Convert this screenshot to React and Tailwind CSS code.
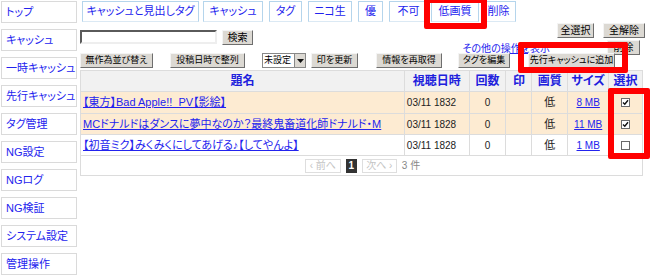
import React from "react";

const FONT = "[font-family:'Liberation_Sans','Noto_Sans_CJK_JP',sans-serif] [font-feature-settings:'palt']";

const sideItems = ["トップ", "キャッシュ", "一時キャッシュ", "先行キャッシュ", "タグ管理", "NG設定", "NGログ", "NG検証", "システム設定", "管理操作"];

const tabs = [
  ["キャッシュと見出しタグ", "w-[117px] ml-[2px]"],
  ["キャッシュ", "w-[60px] ml-[4px]"],
  ["タグ", "w-[33px] ml-[6px]"],
  ["ニコ生", "w-[44px] ml-[6px]"],
  ["優", "w-[25px] ml-[6px]"],
  ["不可", "w-[39px] ml-[6px]"],
  ["低画質", "w-[48px] ml-[3px]"],
  ["削除", "w-[35px] ml-[2px]"],
];

function Btn({ children, className = "", size = "text-[10px]" }) {
  return (
    <div className={`h-[15px] flex items-center justify-center bg-[#dcd9d3] border border-t-[#f4f4f4] border-l-[#f4f4f4] border-r-[#6e6e6e] border-b-[#6e6e6e] ${size} leading-none text-black whitespace-nowrap overflow-hidden ${className}`}>
      {children}
    </div>
  );
}

function Check({ checked }) {
  return (
    <span className="inline-flex w-[9px] h-[9px] border border-[#6a6a6a] bg-white items-center justify-center">
      {checked && (
        <svg width="7" height="7" viewBox="0 0 7 7">
          <path d="M1 3.5 L2.8 5.3 L6 1.3" stroke="#111" strokeWidth="1.4" fill="none" />
        </svg>
      )}
    </span>
  );
}

const rows = [
  { title: "【東方】Bad Apple!!  PV【影絵】", date: "03/11 1832", size: "8 MB", checked: true, bg: "bg-[#fdebd2]", h: "h-[22px]" },
  { title: "MCドナルドはダンスに夢中なのか？最終鬼畜道化師ドナルド・M", date: "03/11 1828", size: "11 MB", checked: true, bg: "bg-[#fdebd2]", h: "h-[21px]" },
  { title: "【初音ミク】みくみくにしてあげる♪【してやんよ】", date: "03/11 1828", size: "1 MB", checked: false, bg: "bg-white", h: "h-[21px]" },
];

const cols = ["w-[325px]", "w-[65px]", "w-[37px]", "w-[26px]", "w-[36px]", "w-[41px]", "w-[33px]"];

export default function App() {
  return (
    <div className={`relative w-[650px] h-[280px] overflow-hidden bg-white ${FONT}`}>
      <div className="flex">
        {/* Sidebar */}
        <div className="w-[78px] flex flex-col gap-[6px] pt-[1px]">
          {sideItems.map((s) => (
            <div key={s} className="ml-[1px] w-[76px] h-[22px] border border-[#dadada] flex items-center pl-[4px] text-[11px] text-[#2323ee] whitespace-nowrap">
              {s}
            </div>
          ))}
        </div>

        {/* Main */}
        <div className="ml-[2px] w-[565px] flex flex-col">
          {/* Tabs */}
          <div className="h-[22px] pt-[1px] flex">
            {tabs.map(([t, cls]) => (
              <div key={t} className={`${cls} h-[21px] border border-[#b5d5ec] border-b-[#dbe9f4] flex items-center justify-center text-[11px] text-[#2323ee] whitespace-nowrap`}>
                {t}
              </div>
            ))}
          </div>

          {/* Top block */}
          <div className="h-[30px] flex justify-between">
            <div className="flex items-start pt-[8px]">
              <div className="w-[137px] h-[14px] bg-white border-2 border-t-[#5a5a5a] border-l-[#5a5a5a] border-r-[#eeeeee] border-b-[#eeeeee]" />
              <Btn className="w-[31px] ml-[5px]">検索</Btn>
            </div>
            <div className="w-[190px] flex flex-col items-end">
              <div className="flex gap-[9px] pt-[1px]">
                <Btn className="w-[37px] h-[14px]">全選択</Btn>
                <Btn className="w-[42px] h-[14px]">全解除</Btn>
              </div>
              <div className="flex items-start mr-[5px] mt-[2px]">
                <span className="text-[10px] leading-none text-[#2323ee] underline mt-[4px] whitespace-nowrap">その他の操作を表示</span>
                <Btn className="w-[33px] h-[12px] ml-[57px]">削除</Btn>
              </div>
            </div>
          </div>

          {/* Button row */}
          <div className="flex items-center mt-[1px]">
            <Btn size="text-[9px]" className="w-[73px]">無作為並び替え</Btn>
            <Btn size="text-[9px]" className="w-[75px] ml-[17px]">投稿日時で整列</Btn>
            <div className="w-[44px] h-[15px] ml-[17px] flex border border-[#888] bg-white">
              <span className="flex-1 text-[9px] leading-[13px] pl-[1px] text-black whitespace-nowrap">未設定</span>
              <span className="w-[11px] bg-[#dcd9d3] border-l border-[#888] flex items-center justify-center">
                <svg width="7" height="4" viewBox="0 0 7 4"><path d="M0 0 H7 L3.5 4 Z" fill="#111" /></svg>
              </span>
            </div>
            <Btn size="text-[9px]" className="w-[47px] ml-[5px]">印を更新</Btn>
            <Btn size="text-[9px]" className="w-[66px] ml-[18px]">情報を再取得</Btn>
            <Btn size="text-[9px]" className="w-[52px] ml-[16px]">タグを編集</Btn>
            <Btn size="text-[9px]" className="w-[87px] ml-[18px]">先行キャッシュに追加</Btn>
          </div>

          {/* Table */}
          <div className="mt-[2px] w-[563px] border border-[#dcdcdc]">
            <div className="flex h-[21px] bg-[#f1f1f1] border-b border-[#dcdcdc] text-[12px] font-bold text-[#2020dd]">
              {["題名", "視聴日時", "回数", "印", "画質", "サイズ", "選択"].map((h, i) => (
                <div key={h} className={`${cols[i]} flex items-center justify-center ${i < 6 ? "border-r border-[#dcdcdc]" : ""}`}>{h}</div>
              ))}
            </div>
            {rows.map((r) => (
              <div key={r.title} className={`flex ${r.h} ${r.bg} border-b border-[#dcdcdc]`}>
                <div className={`${cols[0]} flex items-center pl-[2px] border-r border-[#dcdcdc] text-[11px] text-[#2323ee] underline whitespace-pre overflow-hidden`}>{r.title}</div>
                <div className={`${cols[1]} flex items-center pl-[2px] border-r border-[#dcdcdc] text-[10px] text-[#222]`}>{r.date}</div>
                <div className={`${cols[2]} flex items-center justify-center border-r border-[#dcdcdc] text-[10px] text-[#222]`}>0</div>
                <div className={`${cols[3]} border-r border-[#dcdcdc]`} />
                <div className={`${cols[4]} flex items-center justify-center border-r border-[#dcdcdc] text-[11px] text-[#222]`}>低</div>
                <div className={`${cols[5]} flex items-center justify-center border-r border-[#dcdcdc] text-[10px] text-[#2323ee] underline`}>{r.size}</div>
                <div className={`${cols[6]} flex items-center justify-center`}><Check checked={r.checked} /></div>
              </div>
            ))}
            <div className="h-[19px] flex items-center justify-center gap-[5px] pl-[2px]">
              <span className="w-[36px] h-[14px] border border-[#dedede] text-[10px] text-[#c4c4c4] flex items-center justify-center whitespace-nowrap">‹ 前へ</span>
              <span className="w-[11px] h-[14px] bg-[#333] text-white text-[10px] font-bold flex items-center justify-center">1</span>
              <span className="w-[35px] h-[14px] border border-[#dedede] text-[10px] text-[#c4c4c4] flex items-center justify-center whitespace-nowrap">次へ ›</span>
              <span className="text-[10px] text-[#888] whitespace-nowrap">3 件</span>
            </div>
          </div>
        </div>
      </div>

      {/* Red annotation boxes */}
      <div className="absolute left-[424px] top-[-3px] w-[63px] h-[32px] border-[6px] border-[#ff0000] rounded-[2px]" />
      <div className="absolute left-[518px] top-[42px] w-[110px] h-[31px] border-[6px] border-[#ff0000] rounded-[2px]" />
      <div className="absolute left-[608px] top-[88px] w-[42px] h-[71px] border-[6px] border-[#ff0000] rounded-[2px]" />
    </div>
  );
}
